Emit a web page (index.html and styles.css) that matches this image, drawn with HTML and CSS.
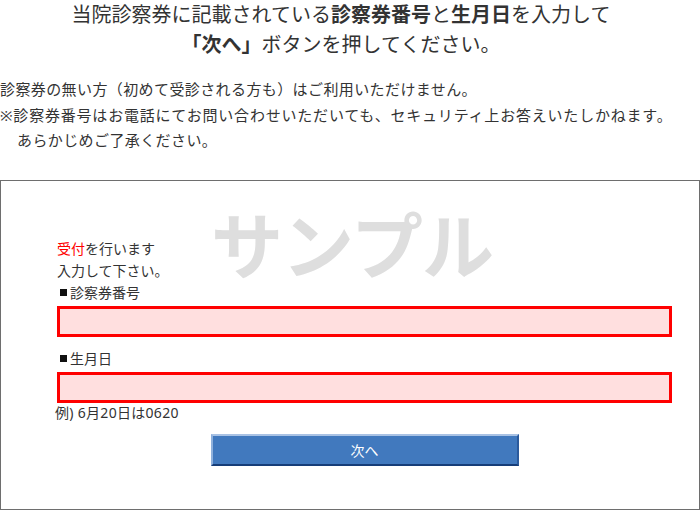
FILE: index.html
```html
<!DOCTYPE html>
<html lang="ja">
<head>
    <meta charset="UTF-8">
    <title>診察券番号入力</title>
    <link rel="stylesheet" href="styles.css">
</head>
<body>
    <div class="lead">
        当院診察券に記載されている<b>診察券番号</b>と<b>生月日</b>を入力して<br>
        <b>「次へ」</b>ボタンを押してください。
    </div>

    <div class="notes">
        <span class="line">診察券の無い方（初めて受診される方も）はご利用いただけません。</span>
        <span class="line wide">※診察券番号はお電話にてお問い合わせいただいても、セキュリティ上お答えいたしかねます。</span>
        <span class="line indent">あらかじめご了承ください。</span>
    </div>

    <div class="box">
        <div class="sample">サンプル</div>
        <form class="form" onsubmit="return false;">
            <div class="msg"><span class="red">受付</span>を行います</div>
            <div class="msg">入力して下さい。</div>

            <label class="label" for="card-no"><span class="sq"></span>診察券番号</label>
            <input type="text" id="card-no" class="field">

            <label class="label label-gap" for="birth"><span class="sq"></span>生月日</label>
            <input type="text" id="birth" class="field">
            <div class="example">例) 6月20日は0620</div>

            <div class="actions">
                <button type="submit" class="next">次へ</button>
            </div>
        </form>
    </div>
</body>
</html>
```

FILE: styles.css
```css
body { margin: 0; font-family: "Noto Sans", "Noto Sans CJK JP", sans-serif; color: #333; background: #fff; }
b { font-weight: bold; }
.lead { text-align: center; font-size: 20px; line-height: 30px; padding-right: 18px; }
.notes { margin-top: 17px; font-size: 15px; line-height: 25.5px; letter-spacing: 0.4px; }
.notes .line { display: block; white-space: nowrap; }
.notes .wide { letter-spacing: 0.8px; }
.notes .indent { padding-left: 17px; }
.box { position: relative; margin-top: 26px; height: 328px; border: 1px solid #6e6e6e; }
.sample { position: absolute; top: 28px; left: 4px; right: 0; text-align: center; font-size: 72px; line-height: 1; font-weight: bold; color: #dedede; letter-spacing: -1px; pointer-events: none; }
.form { position: relative; margin: 0 0 0 56px; padding-top: 57px; width: 615px; font-size: 14px; }
.msg { line-height: 22px; }
.red { color: #ff0000; }
.label { display: flex; align-items: center; line-height: 22px; }
.label-gap { margin-top: 11px; }
.sq { display: inline-block; width: 7px; height: 7px; margin: 0 3px 0 3px; background: #111; }
.field { display: block; box-sizing: border-box; width: 615px; height: 31px; margin: 2px 0 0 0; border: 3px solid #ff0000; background: #ffdfdf; font-size: 14px; outline: none; }
.example { line-height: 20px; margin-left: -2px; letter-spacing: 0.3px; }
.actions { display: flex; justify-content: center; margin-top: 11px; }
.next { box-sizing: border-box; width: 308px; height: 32px; background: #4179be; color: #fff; font-family: inherit; font-size: 14px; border: 2px solid #2b5a9c; border-top-color: #a9c2e4; border-left-color: #8eb0dc; border-bottom-color: #163d78; cursor: pointer; }
```
